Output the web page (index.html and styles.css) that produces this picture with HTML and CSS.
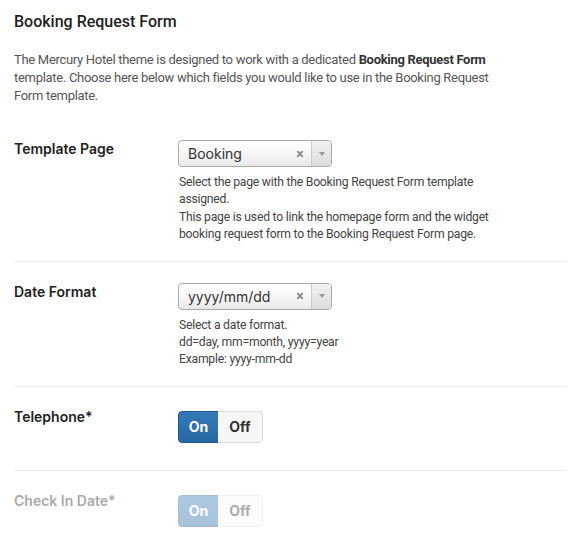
FILE: index.html
```html
<!DOCTYPE html>
<html>
<head>
<meta charset="utf-8">
<link rel="stylesheet" href="styles.css">
</head>
<body>
<div class="page">
  <h2 class="title">Booking Request Form</h2>
  <p class="intro">The Mercury Hotel theme is designed to work with a dedicated <b>Booking Request Form</b> template. Choose here below which fields you would like to use in the Booking Request Form template.</p>

  <div class="row first">
    <div class="label">Template Page</div>
    <div class="field">
      <div class="select">
        <span class="sel-text">Booking</span>
        <span class="sel-clear">×</span>
        <span class="sel-arrow"><span class="tri"></span></span>
      </div>
      <div class="help">Select the page with the Booking Request Form template assigned.<br>This page is used to link the homepage form and the widget booking request form to the Booking Request Form page.</div>
    </div>
  </div>

  <div class="row">
    <div class="label">Date Format</div>
    <div class="field">
      <div class="select">
        <span class="sel-text">yyyy/mm/dd</span>
        <span class="sel-clear">×</span>
        <span class="sel-arrow"><span class="tri"></span></span>
      </div>
      <div class="help">Select a date format.<br>dd=day, mm=month, yyyy=year<br>Example: yyyy-mm-dd</div>
    </div>
  </div>

  <div class="row row-toggle">
    <div class="label">Telephone*</div>
    <div class="field">
      <div class="toggle">
        <span class="t-on">On</span><span class="t-off">Off</span>
      </div>
    </div>
  </div>

  <div class="row row-toggle disabled">
    <div class="label">Check In Date*</div>
    <div class="field">
      <div class="toggle">
        <span class="t-on">On</span><span class="t-off">Off</span>
      </div>
    </div>
  </div>
</div>
</body>
</html>
```
FILE: styles.css
```css
html, body {
  margin: 0;
  padding: 0;
  background: #ffffff;
}
body {
  font-family: Roboto, "Liberation Sans", sans-serif;
  color: #444;
  font-size: 13px;
}
.page {
  padding: 0 14px;
}
.title {
  margin: 0;
  padding-top: 12px;
  font-size: 16px;
  font-weight: 500;
  color: #222;
  line-height: 20px;
}
.intro {
  margin: 19px 0 0 0;
  max-width: 500px;
  line-height: 18px;
  color: #555;
  font-size: 13px;
  letter-spacing: -0.3px;
}
.intro b {
  font-weight: 700;
  color: #333;
}
.row {
  display: flex;
  border-bottom: 1px solid #eaeaea;
  padding: 21px 0 17px 0;
}
.row.first {
  margin-top: 35px;
  padding-top: 0;
}
.label {
  width: 164px;
  flex: none;
  font-family: Inter, "Liberation Sans", sans-serif;
  font-size: 14px;
  font-weight: 600;
  color: #222;
  line-height: 18px;
}
.field {
  flex: 1;
}
.select {
  box-sizing: border-box;
  width: 154px;
  height: 27px;
  border: 1px solid #aaa;
  border-radius: 4px;
  background: linear-gradient(#ffffff 0%, #f4f4f4 60%, #e9e9e9 100%);
  display: flex;
  align-items: center;
}
.sel-text {
  flex: 1;
  padding-left: 9px;
  font-family: Inter, "Liberation Sans", sans-serif;
  font-size: 14px;
  color: #333;
}
.sel-clear {
  width: 16px;
  color: #888;
  font-size: 14px;
  font-weight: 700;
  text-align: center;
  margin-right: 3px;
}
.sel-arrow {
  width: 19px;
  height: 100%;
  border-left: 1px solid #ccc;
  border-radius: 0 3px 3px 0;
  background: linear-gradient(#f2f2f2, #dcdcdc);
  display: flex;
  align-items: center;
  justify-content: center;
}
.tri {
  width: 0;
  height: 0;
  border-left: 3px solid transparent;
  border-right: 3px solid transparent;
  border-top: 4px solid #999;
}
.help {
  margin-top: 7px;
  max-width: 335px;
  line-height: 17.4px;
  color: #444;
  font-size: 12.2px;
  letter-spacing: -0.23px;
  padding-left: 1px;
}
.row-toggle {
  padding-top: 21px;
  padding-bottom: 27px;
}
.disabled {
  border-bottom: none;
}
.toggle {
  display: inline-flex;
  box-sizing: border-box;
  height: 32px;
  margin-top: 3px;
  border-radius: 4px;
  overflow: hidden;
  font-family: Inter, "Liberation Sans", sans-serif;
  font-size: 14px;
  font-weight: 700;
  line-height: 30px;
}
.t-on {
  width: 39px;
  text-align: center;
  background: linear-gradient(#337ab7, #2868a3);
  color: #fff;
  border: 1px solid #22598c;
  border-right: none;
  border-radius: 4px 0 0 4px;
}
.t-off {
  width: 44px;
  text-align: center;
  background: #f6f6f6;
  color: #333;
  border: 1px solid #dcdcdc;
  border-left: none;
  border-radius: 0 4px 4px 0;
}
.disabled .label {
  color: #aaa;
}
.disabled .toggle {
  opacity: 0.4;
}
```
